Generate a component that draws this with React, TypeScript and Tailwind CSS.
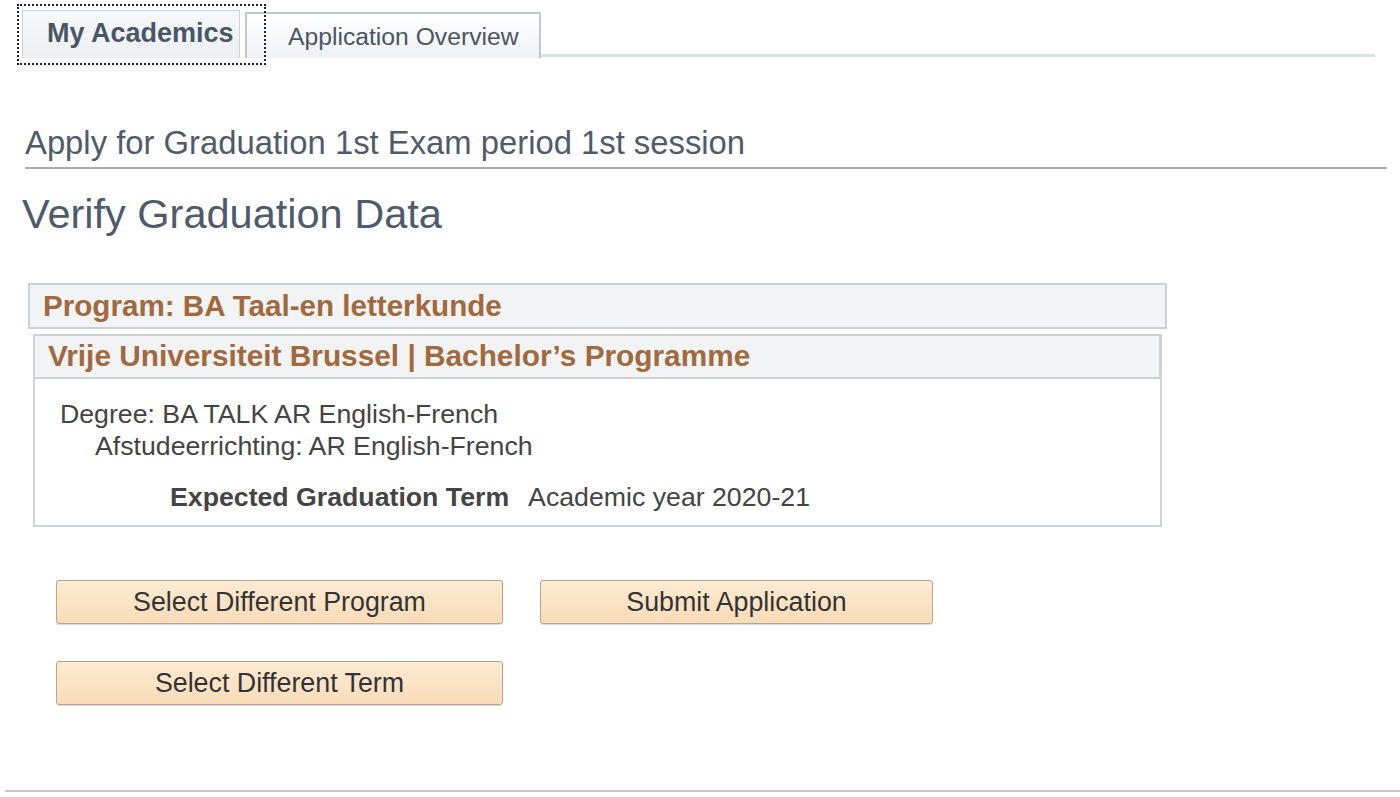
import React from "react";

const font = { fontFamily: '"Liberation Sans", Arial, sans-serif' };

function Btn({ children, w }: { children: React.ReactNode; w: string }) {
  return (
    <button
      className={`${w} h-[44px] rounded-[3px] border border-[#b9a48e] bg-gradient-to-b from-[#fdebd3] to-[#f9dcb8] text-[26.8px] leading-[30px] text-[#333] shadow-[0_1px_1px_rgba(0,0,0,0.15)]`}
    >
      {children}
    </button>
  );
}

export default function App() {
  return (
    <div className="w-[1400px] h-[797px] bg-white overflow-hidden flex flex-col" style={font}>
      {/* Tabs */}
      <div className="relative flex items-end pl-[22px] pt-[10px] pr-[25px]">
        <div className="absolute left-[17px] top-[4px] w-[249px] h-[61px] border-2 border-dotted border-[#222] pointer-events-none" />
        <div className="w-[218px] h-[48px] border border-b-0 border-[#cfd3d8] bg-gradient-to-b from-[#f7f8fa] to-[#eceff2] flex items-center pl-[24px] text-[27px] font-bold text-[#4a5666] pb-[2px]">
          My Academics
        </div>
        <div className="ml-[5px] w-[296px] h-[46px] border-2 border-b-0 border-[#c4c8cd] bg-gradient-to-b from-white to-[#eef1f5] flex items-center pl-[41px] text-[24.7px] text-[#4a5666] pt-[1px]">
          Application Overview
        </div>
        <div className="flex-1 h-[3px] bg-[#dde2e8] mb-[1px]" />
      </div>

      {/* Title */}
      <div className="ml-[25px] mr-[13px] mt-[66px] border-b-2 border-[#a9adb2] pb-[5px]">
        <div className="text-[32.8px] leading-[38px] text-[#4f5b6b]">
          Apply for Graduation 1st Exam period 1st session
        </div>
      </div>
      <div className="ml-[22px] mt-[21px] text-[41.5px] leading-[48px] text-[#4f5b6b]">Verify Graduation Data</div>

      {/* Program box */}
      <div className="ml-[28px] mt-[45px] w-[1139px] h-[46px] border-2 border-[#cdd1d5] bg-[#f1f3f5] flex items-center pl-[13px]">
        <span className="text-[29.6px] font-bold text-[#a0693e]">Program: BA Taal-en letterkunde</span>
      </div>
      <div className="ml-[33px] mt-[5px] w-[1129px] border-2 border-t-0 border-[#d0d3d6]">
        <div className="h-[45px] border-t-2 border-b-2 border-r-[3px] -mr-[2px] border-[#cdd1d5] bg-[#f1f3f5] flex items-center pl-[13px]">
          <span className="text-[29.8px] font-bold text-[#a0693e]">Vrije Universiteit Brussel | Bachelor’s Programme</span>
        </div>
        <div className="pt-[19px] pb-[12px] text-[26.7px] text-[#444] leading-[32px]">
          <div className="pl-[25px]">Degree: BA TALK AR English-French</div>
          <div className="pl-[60px]">Afstudeerrichting: AR English-French</div>
          <div className="pl-[135px] mt-[19px] flex gap-[19px]">
            <span className="font-bold">Expected Graduation Term</span>
            <span>Academic year 2020-21</span>
          </div>
        </div>
      </div>

      {/* Buttons */}
      <div className="ml-[56px] mt-[53px] flex gap-[37px]">
        <Btn w="w-[447px]">Select Different Program</Btn>
        <Btn w="w-[393px]">Submit Application</Btn>
      </div>
      <div className="ml-[56px] mt-[37px] flex">
        <Btn w="w-[447px]">Select Different Term</Btn>
      </div>

      <div className="mt-auto mb-[5px] ml-[5px] h-[2px] bg-[#c4c6c8]" />
    </div>
  );
}
